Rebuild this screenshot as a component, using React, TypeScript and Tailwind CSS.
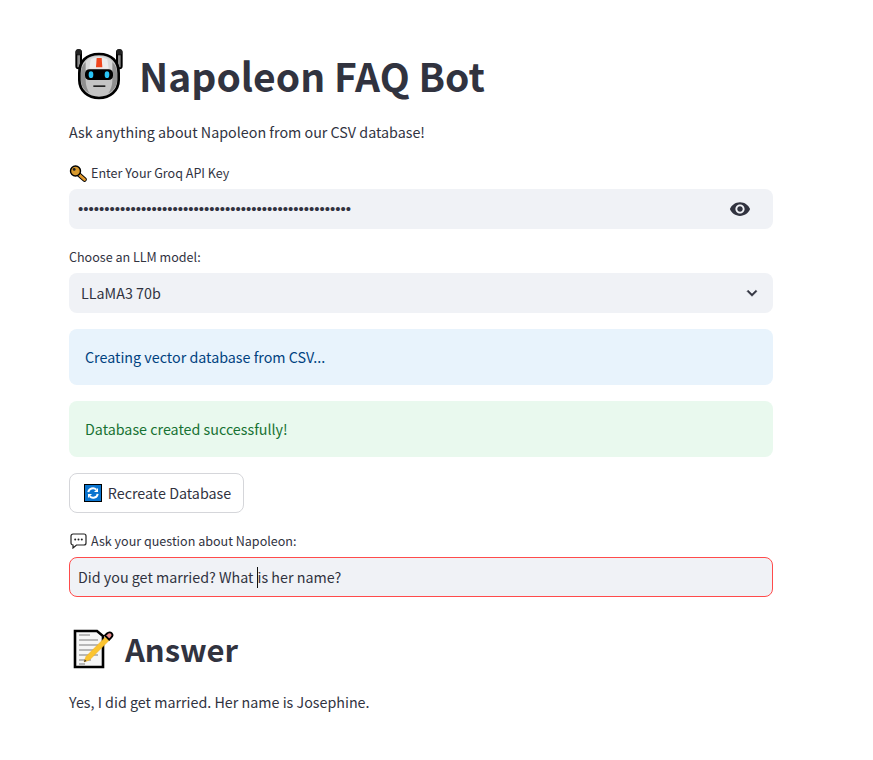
import React from 'react';

const RobotIcon = () => (
  <svg width="50" height="50" viewBox="0 0 150 150" className="shrink-0 overflow-visible">
    <path d="M14 8v40M136 8v40" fill="none" stroke="#000" strokeWidth="20" strokeLinecap="round" />
    <path d="M14 16v36M136 16v36" fill="none" stroke="#8c8c8c" strokeWidth="8" />
    <circle cx="14" cy="6" r="9" fill="#222" />
    <circle cx="136" cy="6" r="9" fill="#222" />
    <path d="M75 12C36 12 16 35 16 70v20c0 32 26 54 59 54s59-22 59-54V70c0-35-20-58-59-58z" fill="#c4c4c4" stroke="#000" strokeWidth="8" />
    <path d="M22 70c0-30 21-52 53-52s53 22 53 52v4H22z" fill="#d8d8d8" />
    <path d="M50 28c8-4 16-6 25-6s17 2 25 6l4 28H46z" fill="#ececec" />
    <path d="M21 70c0-14 5-26 14-34v56c0 14 5 28 12 38-16-8-26-22-26-40zM129 70c0-14-5-26-14-34v56c0 14-5 28-12 38 16-8 26-22 26-40z" fill="#8f8f8f" />
    <path d="M68 24h15l2 28H66z" fill="#f0461e" />
    <rect x="33" y="58" width="84" height="32" rx="13" fill="#000" />
    <ellipse cx="51" cy="74" rx="7" ry="10" fill="#29c5f6" />
    <ellipse cx="99" cy="74" rx="7" ry="10" fill="#29c5f6" />
    <rect x="58" y="106" width="36" height="5" fill="#222" />
  </svg>
);

const KeyIcon = () => (
  <svg width="18" height="17" viewBox="0 0 18 17" className="shrink-0">
    <path d="M7 7l8.500 7.500" stroke="#000" strokeWidth="4.500" strokeLinecap="round" />
    <path d="M7 7l8.500 7.500" stroke="#e0982c" strokeWidth="2.800" strokeLinecap="round" />
    <circle cx="6.500" cy="6" r="5" fill="#d89a2e" stroke="#000" strokeWidth="1.400" />
    <circle cx="5.200" cy="4.400" r="1.400" fill="#222" />
  </svg>
);

const SpeechIcon = () => (
  <svg width="17" height="16" viewBox="0 0 17 16" className="shrink-0">
    <path d="M3 1h11a2 2 0 0 1 2 2v7a2 2 0 0 1-2 2H6.500L3 15v-3a2 2 0 0 1-2-2V3a2 2 0 0 1 2-2z" fill="#fff" stroke="#222" strokeWidth="1.200" />
    <circle cx="5.200" cy="6.500" r="1" fill="#222" />
    <circle cx="8.500" cy="6.500" r="1" fill="#222" />
    <circle cx="11.800" cy="6.500" r="1" fill="#222" />
  </svg>
);

const RefreshIcon = () => (
  <svg width="18" height="18" viewBox="0 0 18 18" className="shrink-0">
    <rect x="0.500" y="0.500" width="17" height="17" fill="#0a74cf" stroke="#000" />
    <path d="M4.300 8.200a4.700 4.700 0 0 1 8-2.600M13.700 9.800a4.700 4.700 0 0 1-8 2.600" fill="none" stroke="#fff" strokeWidth="2" />
    <path d="M14 4v4h-4zM4 14v-4h4z" fill="#fff" />
  </svg>
);

const MemoIcon = () => (
  <svg width="42" height="40" viewBox="0 0 42 40" className="shrink-0">
    <path d="M2 2h22l6 5v31H2z" fill="#f6f6f6" stroke="#000" strokeWidth="2.600" />
    <path d="M6 6h11M6 11h19M6 16h19M6 21h19M6 26h19M6 31h12M6 35h6" stroke="#a4a4a4" strokeWidth="1.400" />
    <path d="M11 33l2-5.500L33 7.500l3.500 3.500L16.500 31z" fill="#fbc430" stroke="#eca81a" strokeWidth="0.500" />
    <path d="M32 6.500l2-2c1.500-1.500 3.500-1.500 4.600-.4s1.100 3.100-.4 4.600l-2 2z" fill="#e78b8b" stroke="#000" strokeWidth="1.800" />
    <path d="M11 33l.8-2.400 1.700 1.500z" fill="#333" />
  </svg>
);

export default function App() {
  return (
    <div className="min-h-screen bg-white text-[#31333f] font-['Noto_Sans_CJK_SC','Source_Sans_Pro',sans-serif] text-[14.3px] leading-[24px]">
      <div className="w-[704px] ml-[69px] pt-[47px]">
        {/* Title */}
        <h1 className="flex items-center gap-[15px] h-[56px] pl-[5px] text-[39px] font-bold leading-[56px]">
          <RobotIcon />
          <span>Napoleon FAQ Bot</span>
        </h1>
        <p className="mt-[17px]">Ask anything about Napoleon from our CSV database!</p>

        {/* API key */}
        <label className="mt-[17px] flex items-center gap-[4px] h-[24px] text-[12.55px]">
          <KeyIcon />
          <span>Enter Your Groq API Key</span>
        </label>
        <div className="mt-[4px] flex items-center h-[40px] rounded-lg bg-[#f0f2f6] pl-[9px] pr-[22px]">
          <input
            type="password"
            readOnly
            value="gsk_abcdefghijklmnopqrstuvwxyz0123456789abcdefghijkl"
            className="flex-1 bg-transparent outline-none font-['Liberation_Sans',sans-serif] text-[15px]"
          />
          <svg width="22" height="22" viewBox="0 0 24 24" fill="#31333f">
            <path d="M12 4.500C7 4.500 2.730 7.610 1 12c1.730 4.390 6 7.500 11 7.500s9.270-3.110 11-7.500c-1.730-4.390-6-7.500-11-7.500zM12 17c-2.760 0-5-2.240-5-5s2.240-5 5-5 5 2.240 5 5-2.240 5-5 5zm0-8c-1.660 0-3 1.340-3 3s1.340 3 3 3 3-1.340 3-3-1.340-3-3-3z" />
          </svg>
        </div>

        {/* Model */}
        <div className="mt-[16px] flex items-center h-[24px] text-[12.55px]">Choose an LLM model:</div>
        <div className="mt-[4px] flex items-center justify-between h-[40px] rounded-lg bg-[#f0f2f6] pl-[12px] pr-[11px]">
          <span>LLaMA3 70b</span>
          <svg width="20" height="20" viewBox="0 0 24 24" fill="#31333f" stroke="#31333f" strokeWidth="0.600">
            <path d="M16.590 8.590 12 13.170 7.410 8.590 6 10l6 6 6-6z" />
          </svg>
        </div>

        {/* Alerts */}
        <div className="mt-[16px] flex items-center h-[56px] rounded-lg bg-[#e8f3fc] px-[16px] text-[#004280]">
          Creating vector database from CSV...
        </div>
        <div className="mt-[16px] flex items-center h-[56px] rounded-lg bg-[#e9f9ee] px-[16px] text-[#177233]">
          Database created successfully!
        </div>

        <button className="mt-[16px] flex items-center justify-center gap-[6px] w-[175px] h-[40px] pl-[2px] rounded-lg border border-[#d5d6da] bg-white">
          <RefreshIcon />
          <span>Recreate Database</span>
        </button>

        {/* Question */}
        <label className="mt-[16px] flex items-center gap-[4px] h-[24px] pl-[1px] text-[12.55px]">
          <SpeechIcon />
          <span>Ask your question about Napoleon:</span>
        </label>
        <div className="mt-[4px] flex items-center h-[40px] rounded-lg border border-[#ff4b4b] bg-[#f0f2f6] pl-[8px]">
          <span>Did you get married? What</span>
          <span className="ml-[3px] w-px h-[21px] bg-[#111]" />
          <span>is her name?</span>
        </div>

        {/* Answer */}
        <h2 className="mt-[32px] flex items-center gap-[10px] h-[40px] pl-[4px] text-[31px] font-semibold leading-[40px]">
          <MemoIcon />
          <span>Answer</span>
        </h2>
        <p className="mt-[21px]">Yes, I did get married. Her name is Josephine.</p>
      </div>
    </div>
  );
}
